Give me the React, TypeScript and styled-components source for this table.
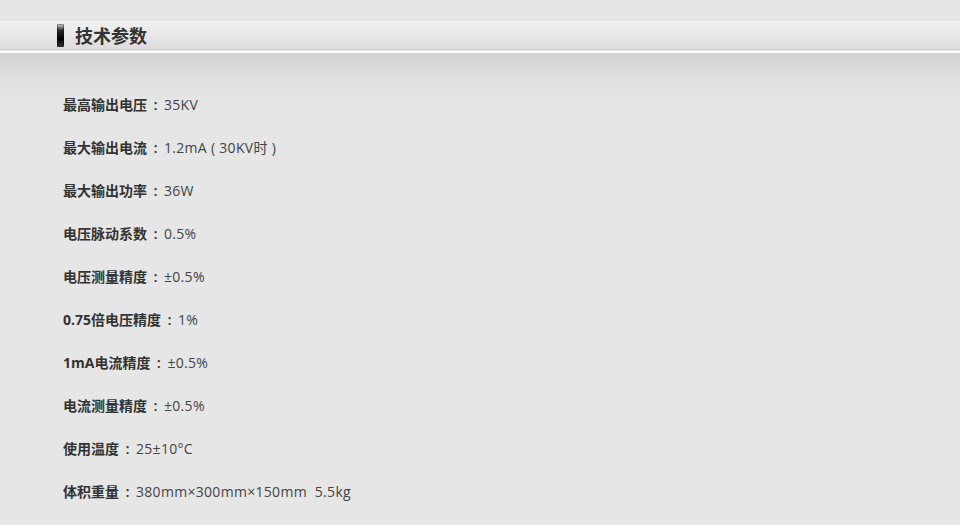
import React from 'react';
import styled, { createGlobalStyle } from 'styled-components';

const GlobalStyle = createGlobalStyle`
  html, body {
    margin: 0;
    padding: 0;
    background: #e6e6e6;
  }
  body {
    font-family: "Open Sans", "Noto Sans CJK SC", sans-serif;
  }
`;

const Page = styled.div`
  width: 960px;
  height: 525px;
  background: #e6e6e6;
  padding-top: 21px;
  box-sizing: border-box;
  overflow: hidden;
`;

const HeaderBar = styled.div`
  height: 28px;
  display: flex;
  align-items: center;
  padding-left: 57px;
  gap: 11px;
  background: linear-gradient(to bottom, #f1f1f1 0%, #e9e9e9 45%, #dcdcdc 100%);
  border-bottom: 1px solid #d2d2d2;
`;

const Marker = styled.span`
  width: 7px;
  height: 23px;
  border-radius: 1px;
  background: linear-gradient(to bottom, #e0e0e0 0%, #9a9a9a 10%, #2a2a2a 28%, #000 65%, #3a3a3a 100%);
  box-shadow: inset 0 0 0 1px rgba(0, 0, 0, 0.35);
`;

const Title = styled.h2`
  margin: 0;
  font-family: "Noto Sans CJK SC", sans-serif;
  font-size: 18px;
  font-weight: 700;
  color: #333;
  line-height: 28px;
`;

const Divider = styled.div`
  height: 2px;
  background: #fdfdfd;
  margin-top: 1px;
`;

const Body = styled.div`
  background: linear-gradient(to bottom, #d0d0d0 0px, #dedede 22px, #e5e5e5 45px, #e6e6e6 60px);
  padding: 30px 0 0 63px;
  height: 472px;
  box-sizing: border-box;
`;

const Row = styled.div`
  height: 43px;
  line-height: 43px;
  font-size: 14px;
  color: #444;
  white-space: pre;
`;

const Label = styled.span`
  font-weight: 700;
  color: #333;
`;

const Colon = styled.span`
  display: inline-block;
  width: 17px;
  text-align: center;
  font-size: 15px;
  font-weight: 600;
  color: #333;
`;

const Value = styled.span`
  letter-spacing: 0.3px;
`;

const specs: [string, string][] = [
  ['最高输出电压', '35KV'],
  ['最大输出电流', '1.2mA ( 30KV时 )'],
  ['最大输出功率', '36W'],
  ['电压脉动系数', '0.5%'],
  ['电压测量精度', '±0.5%'],
  ['0.75倍电压精度', '1%'],
  ['1mA电流精度', '±0.5%'],
  ['电流测量精度', '±0.5%'],
  ['使用温度', '25±10°C'],
  ['体积重量', '380mm×300mm×150mm  5.5kg'],
];

const App: React.FC = () => (
  <Page>
    <GlobalStyle />
    <HeaderBar>
      <Marker />
      <Title>技术参数</Title>
    </HeaderBar>
    <Divider />
    <Body>
      {specs.map(([label, value]) => (
        <Row key={label}>
          <Label>{label}</Label>
          <Colon>:</Colon>
          <Value>{value}</Value>
        </Row>
      ))}
    </Body>
  </Page>
);

export default App;
